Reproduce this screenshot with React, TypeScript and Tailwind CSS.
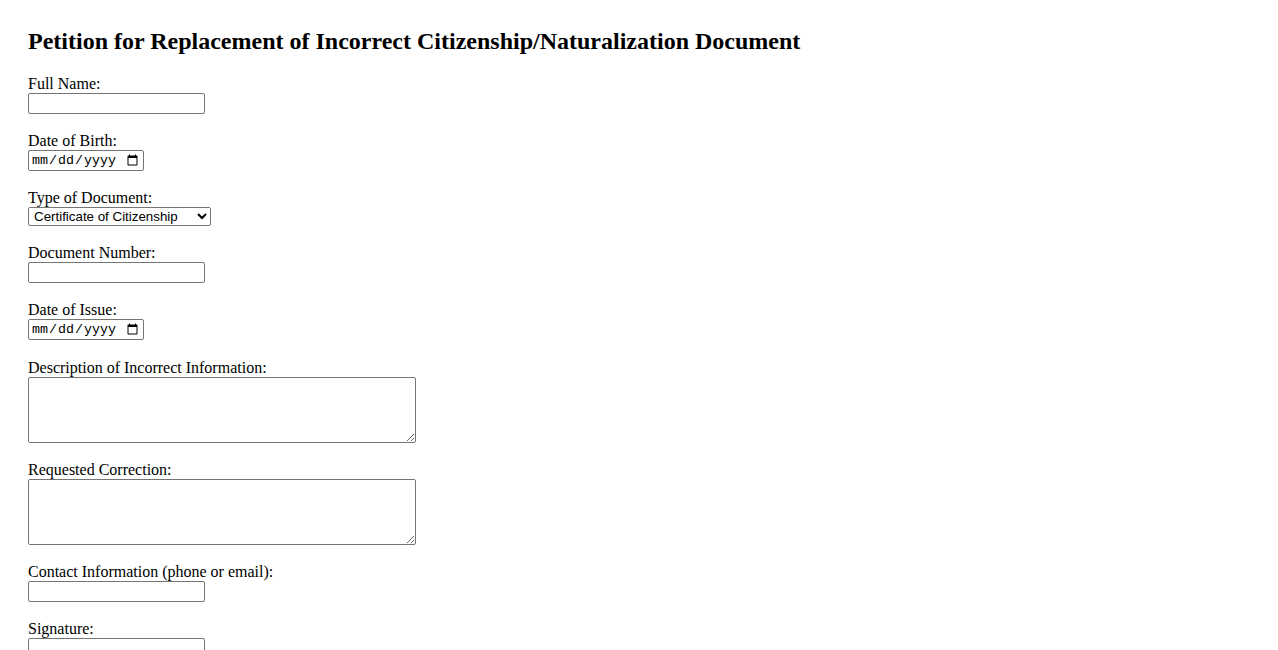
import React from "react"

const labelCls = "block text-[16px] leading-[18px]"
const textInputCls = "block w-[177px] h-[21px] border border-[#767676] rounded-[2px] bg-white px-[2px] py-[1px] font-['Liberation_Sans',Arial,sans-serif] text-[13.33px]"
const dateInputCls = "block w-[116px] h-[21px] border border-[#767676] rounded-[2px] bg-white px-[2px] py-[1px] font-['Liberation_Mono',monospace] text-[13.33px] text-black"
const areaCls = "block w-[388px] h-[66px] border border-[#767676] rounded-[2px] bg-white px-[2px] py-[2px] font-['Liberation_Mono',monospace] text-[13.33px] resize"

export default function App() {
    return (
        <div className="min-h-screen bg-white text-black font-['Liberation_Serif','Times_New_Roman',serif] px-[28px] pt-[27px]">
            <h2 className="text-[24px] leading-[28px] font-bold mb-[20px]">
                Petition for Replacement of Incorrect Citizenship/Naturalization Document
            </h2>

            <form onSubmit={(e) => e.preventDefault()}>
                <div className="mb-[18px]">
                    <label className={labelCls} htmlFor="fullName">Full Name:</label>
                    <input id="fullName" type="text" className={textInputCls} />
                </div>

                <div className="mb-[18px]">
                    <label className={labelCls} htmlFor="dob">Date of Birth:</label>
                    <input id="dob" type="date" className={dateInputCls} />
                </div>

                <div className="mb-[18px]">
                    <label className={labelCls} htmlFor="docType">Type of Document:</label>
                    <select
                        id="docType"
                        defaultValue="citizenship"
                        className="block w-[183px] h-[19px] border border-[#767676] rounded-[2px] bg-white pl-[1px] font-['Liberation_Sans',Arial,sans-serif] text-[13.33px]"
                    >
                        <option value="citizenship">Certificate of Citizenship</option>
                        <option value="naturalization">Certificate of Naturalization</option>
                    </select>
                </div>

                <div className="mb-[18px]">
                    <label className={labelCls} htmlFor="docNumber">Document Number:</label>
                    <input id="docNumber" type="text" className={textInputCls} />
                </div>

                <div className="mb-[19px]">
                    <label className={labelCls} htmlFor="issueDate">Date of Issue:</label>
                    <input id="issueDate" type="date" className={dateInputCls} />
                </div>

                <div className="mb-[18px]">
                    <label className={labelCls} htmlFor="incorrect">Description of Incorrect Information:</label>
                    <textarea id="incorrect" className={areaCls} />
                </div>

                <div className="mb-[18px]">
                    <label className={labelCls} htmlFor="correction">Requested Correction:</label>
                    <textarea id="correction" className={areaCls} />
                </div>

                <div className="mb-[18px]">
                    <label className={labelCls} htmlFor="contact">Contact Information (phone or email):</label>
                    <input id="contact" type="text" className={textInputCls} />
                </div>

                <div className="mb-[18px]">
                    <label className={labelCls} htmlFor="signature">Signature:</label>
                    <input id="signature" type="text" className={textInputCls} />
                </div>
            </form>
        </div>
    )
}
